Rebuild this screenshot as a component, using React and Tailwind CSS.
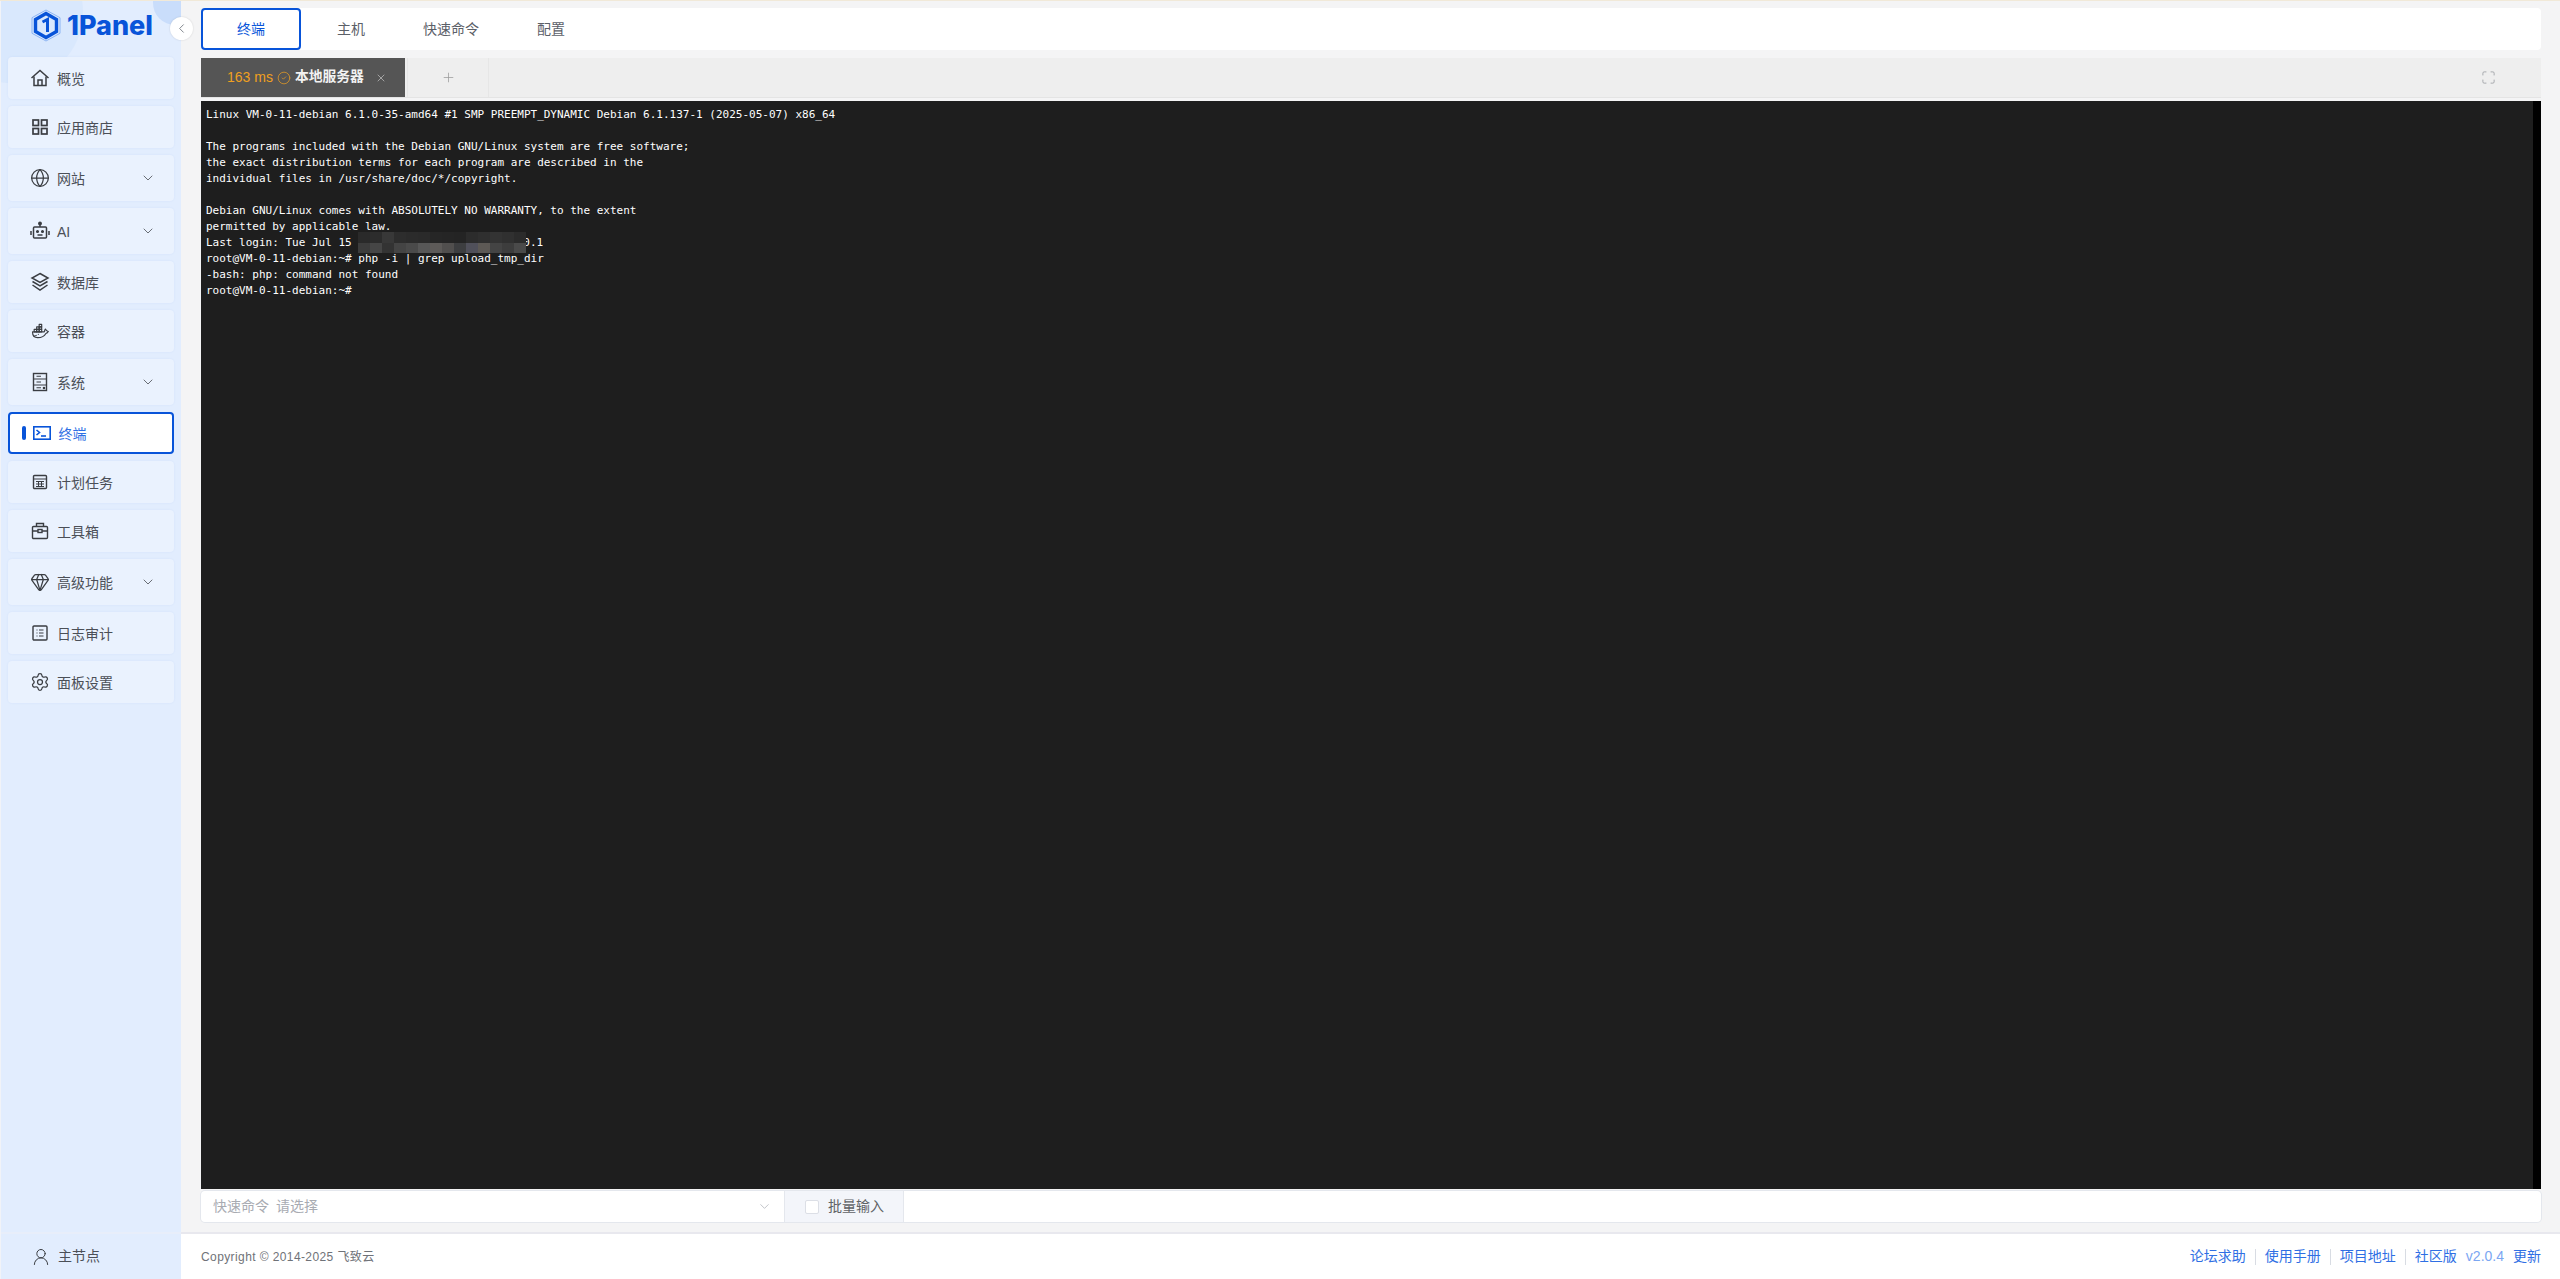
import React from 'react';
import { Globe, Gem, Settings, ChevronDown, ChevronLeft, X, Plus, CircleCheck, Maximize, UserRound } from 'lucide-react';
import { TbBrandDocker } from 'react-icons/tb';

const FONT = "font-['Liberation_Sans','Noto_Sans_CJK_SC',sans-serif]";

const HomeIcon = () => (
  <svg viewBox="0 0 20 20" className="w-[20px] h-[20px]" fill="none" stroke="currentColor" strokeWidth="1.500">
    <path d="M1.500 10 10 2.500 18.500 10" />
    <path d="M4 8.500V17.500H16V8.500" />
    <path d="M8 17.500V12H12V17.500" />
  </svg>
);

const GridIcon = () => (
  <svg viewBox="0 0 20 20" className="w-[20px] h-[20px]" fill="none" stroke="currentColor" strokeWidth="1.700">
    <rect x="3" y="3" width="5.500" height="5.500" />
    <rect x="11.500" y="3" width="5.500" height="5.500" />
    <rect x="3" y="11.500" width="5.500" height="5.500" />
    <rect x="11.500" y="11.500" width="5.500" height="5.500" />
  </svg>
);

const RobotIcon = () => (
  <svg viewBox="0 0 20 20" className="w-[20px] h-[20px]" fill="none" stroke="currentColor" strokeWidth="1.500">
    <circle cx="10" cy="2.500" r="1.200" fill="currentColor" />
    <path d="M10 3.500V6" />
    <rect x="3.500" y="6" width="13" height="11" rx="1" />
    <path d="M1 10V14M19 10V14" />
    <circle cx="7.500" cy="10.500" r="0.800" fill="currentColor" />
    <circle cx="12.500" cy="10.500" r="0.800" fill="currentColor" />
    <path d="M7.500 14H12.500" />
  </svg>
);

const LayersIcon = () => (
  <svg viewBox="0 0 20 20" className="w-[20px] h-[20px]" fill="none" stroke="currentColor" strokeWidth="1.500">
    <path d="M10 1.500 18 6 10 10.500 2 6Z" />
    <path d="M2.500 9.500 10 14 17.500 9.500" />
    <path d="M2.500 13 10 18 17.500 13" />
  </svg>
);

const ServerIcon = () => (
  <svg viewBox="0 0 18 20" className="w-[18px] h-[20px]" fill="none" stroke="currentColor" strokeWidth="1.400">
    <rect x="2.500" y="1.500" width="13" height="17" />
    <path d="M2.500 7H15.500M2.500 13H15.500M5.500 4.300H10M5.500 10H10M5.500 15.800H10" strokeWidth="1.100" />
    <circle cx="13" cy="16" r="0.600" fill="currentColor" />
  </svg>
);

const TerminalIcon = () => (
  <svg viewBox="0 0 18 14" className="w-[18px] h-[14px]" fill="none" stroke="currentColor" strokeWidth="1.600">
    <rect x="0.800" y="0.800" width="16.400" height="12.400" />
    <path d="M3.500 4 6.500 6.500 3.500 9" />
    <path d="M8 10H13" />
  </svg>
);

const CalendarIcon = () => (
  <svg viewBox="0 0 18 18" className="w-[18px] h-[18px]" fill="none" stroke="currentColor" strokeWidth="1.400">
    <rect x="2.500" y="2.500" width="13" height="13" rx="1" />
    <path d="M2.500 6h13M5 8.500h8M5 11h8M5 13.500h8M7.500 8v6M10.500 8v6" strokeWidth="1" />
  </svg>
);

const ToolboxIcon = () => (
  <svg viewBox="0 0 18 18" className="w-[18px] h-[18px]" fill="none" stroke="currentColor" strokeWidth="1.400">
    <path d="M5.500 4.500V1.500H12.500V4.500" />
    <rect x="1.500" y="4.500" width="15" height="12" rx="1" />
    <path d="M1.500 9H7M11 9H16.500" />
    <rect x="7" y="7.500" width="4" height="3" />
  </svg>
);

const LogIcon = () => (
  <svg viewBox="0 0 18 18" className="w-[18px] h-[18px]" fill="none" stroke="currentColor" strokeWidth="1.400">
    <rect x="2" y="2" width="14" height="14" rx="1" />
    <path d="M5.500 6h1M5.500 9h1M5.500 12h1M8 6h4.500M8 9h4.500M8 12h4.500" strokeWidth="1.200" />
  </svg>
);

const menu = [
  { label: '概览', icon: <HomeIcon />, h: 'h-[42px]' },
  { label: '应用商店', icon: <GridIcon />, h: 'h-[42px]' },
  { label: '网站', icon: <Globe size={20} strokeWidth={1.5} />, h: 'h-[46px]', arrow: true },
  { label: 'AI', icon: <RobotIcon />, h: 'h-[46px]', arrow: true },
  { label: '数据库', icon: <LayersIcon />, h: 'h-[42px]' },
  { label: '容器', icon: <TbBrandDocker size={22} strokeWidth={1.4} />, h: 'h-[42px]' },
  { label: '系统', icon: <ServerIcon />, h: 'h-[46px]', arrow: true },
  { label: '终端', icon: <TerminalIcon />, h: 'h-[42px]', active: true },
  { label: '计划任务', icon: <CalendarIcon />, h: 'h-[42px]' },
  { label: '工具箱', icon: <ToolboxIcon />, h: 'h-[42px]' },
  { label: '高级功能', icon: <Gem size={20} strokeWidth={1.5} />, h: 'h-[46px]', arrow: true },
  { label: '日志审计', icon: <LogIcon />, h: 'h-[42px]' },
  { label: '面板设置', icon: <Settings size={20} strokeWidth={1.5} />, h: 'h-[42px]' },
];

const mosaic = [
  'bg-[#2a2a2a]', 'bg-[#2c2c2c]', 'bg-[#383838]', 'bg-[#2d2d2d]', 'bg-[#2b2b2b]', 'bg-[#2a2a2a]', 'bg-[#262626]', 'bg-[#252525]', 'bg-[#242424]', 'bg-[#2c2c2c]', 'bg-[#2f2f2f]', 'bg-[#333333]', 'bg-[#303030]', 'bg-[#2b2b2b]',
  'bg-[#3c3c3c]', 'bg-[#464646]', 'bg-[#333333]', 'bg-[#444444]', 'bg-[#4a4a4a]', 'bg-[#575757]', 'bg-[#5d5a58]', 'bg-[#514f4e]', 'bg-[#3d3e40]', 'bg-[#50505a]', 'bg-[#5d5955]', 'bg-[#444444]', 'bg-[#3d3d3d]', 'bg-[#4a4a4a]',
];

export default function App() {
  return (
    <div className={`h-screen w-screen flex flex-col overflow-hidden bg-[#f4f4f5] ${FONT}`}>
      <div className="h-px bg-[#f1e9d8]" />
      <div className="flex-1 flex min-h-0">
        {/* Sidebar */}
        <aside className="relative w-[181px] shrink-0 flex flex-col bg-[#e2edfe] border-l border-[#f1f3f8]">
          <div className="absolute inset-0 overflow-hidden">
            <div className="absolute -left-[60px] -top-[60px] w-[142px] h-[142px] rounded-full bg-[#d4e4fc]/60" />
            <div className="absolute left-[152px] -top-[20px] w-[44px] h-[44px] rounded-full bg-[#c9ddfb]" />
          </div>
          <div className="relative h-[56px] shrink-0 flex items-center pl-[30px] pb-[7px] gap-[6px]">
            <svg viewBox="0 0 30 33" className="w-[30px] h-[33px]" fill="none">
              <path d="M15 1 29 8.700V24.300L15 32 1 24.300V8.700Z" stroke="#7aa7f0" strokeWidth="0.800" />
              <path d="M15 4.500 25.500 10.500V22.500L15 28.500 4.500 22.500V10.500Z" stroke="#0854d9" strokeWidth="3.400" />
              <path d="M11.500 13 16.500 10.500V23" stroke="#0854d9" strokeWidth="3" />
            </svg>
            <span className="text-[#0854d9] text-[27px] leading-none font-extrabold font-['Inter',sans-serif]">1Panel</span>
          </div>
          <nav className="relative flex flex-col gap-[7px] pl-[7px] pr-[7px]">
            {menu.map((m) =>
              m.active ? (
                <div key={m.label} className={`${m.h} flex items-center rounded-[4px] bg-white border-2 border-[#0854d9] text-[#2f6fe4] text-[14px]`}>
                  <span className="ml-[12px] w-[3.500px] h-[14px] rounded-full bg-[#0854d9]" />
                  <span className="ml-[7px] w-[18px] flex justify-center text-[#0854d9]">{m.icon}</span>
                  <span className="ml-[8px] pt-[2px]">{m.label}</span>
                </div>
              ) : (
                <div key={m.label} className={`${m.h} flex items-center rounded-[4px] bg-[#eaf2fe] shadow-[0_0_2px_rgba(120,160,230,0.15)] text-[#4b4f57] text-[14px] pl-[22px] pr-[18px]`}>
                  <span className="w-[20px] flex justify-center text-[#3a3d42]">{m.icon}</span>
                  <span className="ml-[7px] pt-[2px] flex-1">{m.label}</span>
                  {m.arrow && <ChevronDown size={16} strokeWidth={1.1} className="text-[#3a3d42]" />}
                </div>
              )
            )}
          </nav>
          <div className="mt-auto h-[47px] border-t-2 border-[#e8eefa] flex items-center pl-[30px] gap-[7px] text-[14px] text-[#4b4f57]">
            <UserRound size={20} strokeWidth={1.2} className="text-[#3a3d42]" />
            <span>主节点</span>
          </div>
          <button className="absolute left-[169px] top-[16px] w-[23px] h-[23px] rounded-full bg-white shadow-[0_0_2px_rgba(0,0,0,0.15)] flex items-center justify-center text-[#7b8088]">
            <ChevronLeft size={15} strokeWidth={1.5} />
          </button>
        </aside>

        {/* Main */}
        <main className="flex-1 min-w-0 flex flex-col">
          <div className="flex-1 min-h-0 flex flex-col pl-[20px] pr-[19px] pt-[7px]">
            <div className="h-[42px] shrink-0 flex bg-white rounded-[4px] text-[14px] text-[#5b6068]">
              <div className="w-[100px] flex items-center justify-center rounded-[4px] border-2 border-[#0854d9] text-[#0854d9]">终端</div>
              <div className="w-[100px] flex items-center justify-center">主机</div>
              <div className="w-[100px] flex items-center justify-center">快速命令</div>
              <div className="w-[100px] flex items-center justify-center">配置</div>
            </div>

            <div className="h-[40px] mt-[8px] shrink-0 flex items-stretch bg-[#eeeeee] border-b border-[#e4e4e4]">
              <div className="w-[204px] flex items-center bg-[#555555] pl-[26px] text-[14px]">
                <span className="text-[#f0a020]">163 ms</span>
                <CircleCheck size={14} strokeWidth={1.2} className="ml-[4px] text-[#f0a020]" />
                <span className="ml-[4px] text-[#f2f2f2] font-bold text-[13.800px]">本地服务器</span>
                <X size={12} strokeWidth={1.2} className="ml-[11px] text-[#d9d9d9]" />
              </div>
              <div className="w-[82px] ml-[2px] flex items-center justify-center border-x border-[#e6e6e6] text-[#9a9a9a]">
                <Plus size={15} strokeWidth={1.2} />
              </div>
              <div className="flex-1 flex items-center justify-end pr-[45px] text-[#9ea1a6]">
                <Maximize size={15} strokeWidth={1.4} />
              </div>
            </div>

            {/* Terminal */}
            <div className="mt-[3px] flex-1 min-h-0 flex bg-[#1e1e1e]">
              <div className="flex-1 pl-[5px] pt-[6px] text-[11px] leading-[16px] text-white whitespace-pre font-['DejaVu_Sans_Mono',monospace]">
                <div>Linux VM-0-11-debian 6.1.0-35-amd64 #1 SMP PREEMPT_DYNAMIC Debian 6.1.137-1 (2025-05-07) x86_64</div>
                <div>&nbsp;</div>
                <div>The programs included with the Debian GNU/Linux system are free software;</div>
                <div>the exact distribution terms for each program are described in the</div>
                <div>individual files in /usr/share/doc/*/copyright.</div>
                <div>&nbsp;</div>
                <div>Debian GNU/Linux comes with ABSOLUTELY NO WARRANTY, to the extent</div>
                <div>permitted by applicable law.</div>
                <div className="relative">
                  Last login: Tue Jul 15 <span className="inline-block w-[165px]" />0.1
                  <div className="absolute left-[152px] -top-[3px] w-[168px] h-[21px] grid grid-cols-[repeat(14,12px)] grid-rows-2">
                    {mosaic.map((c, i) => <span key={i} className={c} />)}
                  </div>
                </div>
                <div>root@VM-0-11-debian:~# php -i | grep upload_tmp_dir</div>
                <div>-bash: php: command not found</div>
                <div>root@VM-0-11-debian:~#</div>
              </div>
              <div className="w-[8px] bg-black" />
            </div>

            {/* Quick command */}
            <div className="h-[31px] mt-[2px] mb-[10px] shrink-0 flex bg-white rounded-[4px] shadow-[0_0_0_1px_#e4e7ed] text-[14px]">
              <div className="w-[584px] flex items-center pl-[12px] pr-[12px] border-r border-[#e4e7ed] text-[#a8abb2]">
                <span>快速命令</span>
                <span className="ml-[7px] flex-1">请选择</span>
                <ChevronDown size={15} strokeWidth={1.1} />
              </div>
              <div className="w-[119px] flex items-center pl-[20px] bg-[#f3f5fa] border-r border-[#e4e7ed] text-[#606266]">
                <span className="w-[14px] h-[14px] rounded-[2px] bg-white border border-[#dcdfe6]" />
                <span className="ml-[9px]">批量输入</span>
              </div>
            </div>
          </div>

          {/* Footer */}
          <footer className="h-[47px] shrink-0 flex items-center justify-between bg-white border-t-2 border-[#e8e8ee] pl-[20px] pr-[19px]">
            <span className="text-[12px] tracking-[0.4px] text-[#6f7278]">Copyright © 2014-2025 飞致云</span>
            <div className="flex items-center text-[14px] text-[#2f6fe4]">
              <span>论坛求助</span>
              <span className="mx-[9px] w-px h-[16px] bg-[#d8dce3]" />
              <span>使用手册</span>
              <span className="mx-[9px] w-px h-[16px] bg-[#d8dce3]" />
              <span>项目地址</span>
              <span className="mx-[9px] w-px h-[16px] bg-[#d8dce3]" />
              <span>社区版</span>
              <span className="ml-[9px] text-[#7ba6f2]">v2.0.4</span>
              <span className="ml-[9px]">更新</span>
            </div>
          </footer>
        </main>
      </div>
    </div>
  );
}
